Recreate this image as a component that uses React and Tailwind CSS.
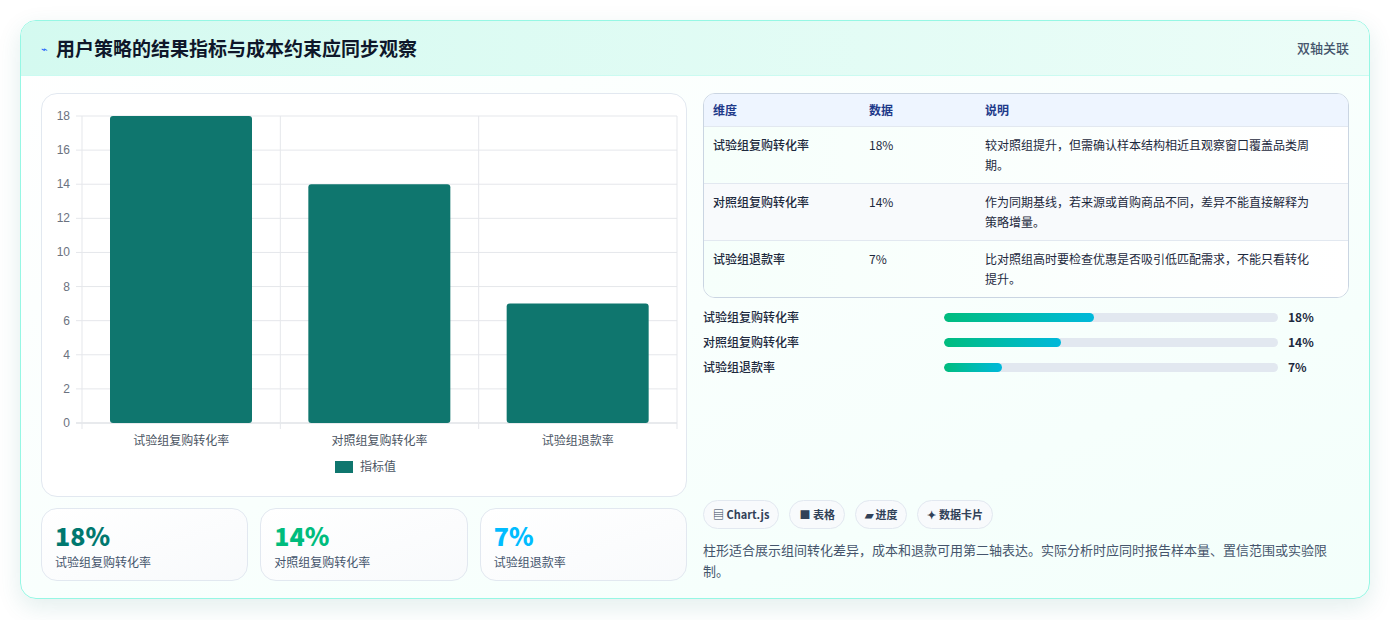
import React from "react";

const F = { fontFamily: '"Noto Sans CJK SC", "Noto Sans", sans-serif' };

const rows = [
  ["试验组复购转化率", "18%", "较对照组提升，但需确认样本结构相近且观察窗口覆盖品类周期。"],
  ["对照组复购转化率", "14%", "作为同期基线，若来源或首购商品不同，差异不能直接解释为策略增量。"],
  ["试验组退款率", "7%", "比对照组高时要检查优惠是否吸引低匹配需求，不能只看转化提升。"],
];
const data = [
  { label: "试验组复购转化率", v: 18 },
  { label: "对照组复购转化率", v: 14 },
  { label: "试验组退款率", v: 7 },
];

function Chart() {
  const x0 = 40, x1 = 635, y0 = 22, y1 = 329;
  const h = (y1 - y0) / 18;
  const cw = (x1 - x0) / 3;
  return (
    <svg width="646" height="402" className="block">
      {[0, 2, 4, 6, 8, 10, 12, 14, 16, 18].map((t) => (
        <g key={t}>
          <line x1={x0 - 6} x2={x1} y1={y1 - t * h} y2={y1 - t * h} stroke={t === 0 ? "#d1d5db" : "#e5e7eb"} />
          <text x={x0 - 12} y={y1 - t * h + 4} textAnchor="end" fontSize="12" fill="#6b7280" fontFamily="Liberation Sans, sans-serif">{t}</text>
        </g>
      ))}
      {[0, 1, 2, 3].map((i) => (
        <line key={i} x1={x0 + i * cw} x2={x0 + i * cw} y1={y0} y2={y1 + 6} stroke="#e5e7eb" />
      ))}
      {data.map((d, i) => (
        <g key={i}>
          <rect x={x0 + i * cw + 28} y={y1 - d.v * h} width={142} height={d.v * h} rx="3" fill="#0f766e" />
          <text x={x0 + i * cw + cw / 2} y={y1 + 22} textAnchor="middle" fontSize="12" fill="#4b5563" style={F}>{d.label}</text>
        </g>
      ))}
      <rect x="293" y="367" width="18" height="12" fill="#0f766e" />
      <text x="318" y="377" fontSize="12" fill="#4b5563" style={F}>指标值</text>
    </svg>
  );
}

export default function App() {
  return (
    <div className="min-h-screen bg-white p-5" style={F}>
      <div className="rounded-2xl border border-teal-200 bg-gradient-to-br from-white to-[#f3fffb] shadow-[0_8px_24px_rgba(15,118,110,0.12)] overflow-hidden">
        <div className="flex h-[55px] items-center justify-between bg-gradient-to-r from-[#d4faf0] to-[#ecfdf8] border-b border-teal-100 px-5">
          <div className="flex items-center gap-2">
            <span className="text-[11px] text-blue-600">⌁</span>
            <h1 className="text-[19px] font-bold text-[#0f172a]">用户策略的结果指标与成本约束应同步观察</h1>
          </div>
          <span className="text-[13px] font-medium text-slate-600">双轴关联</span>
        </div>
        <div className="grid grid-cols-2 gap-4 px-5 pt-[17px] pb-[17px]">
          <div className="flex flex-col gap-[11px]">
            <div className="rounded-2xl border border-slate-200 bg-white h-[404px] overflow-hidden">
              <Chart />
            </div>
            <div className="grid grid-cols-3 gap-3">
              {[["18%", "text-teal-700"], ["14%", "text-emerald-500"], ["7%", "text-sky-400"]].map(([v, c], i) => (
                <div key={i} className="h-[73px] rounded-2xl border border-slate-200 bg-gradient-to-br from-white to-slate-50 px-[13px] pt-[10px]">
                  <div className={`text-[25px] font-extrabold leading-[32px] ${c}`}>{v}</div>
                  <div className="text-[12px] text-slate-600 mt-0.5">{data[i].label}</div>
                </div>
              ))}
            </div>
          </div>
          <div className="flex flex-col">
            <div className="rounded-xl border border-slate-300 overflow-hidden bg-white">
              <div className="grid grid-cols-[156px_116px_1fr] bg-[#eef5ff] border-b border-slate-200 px-[9px] h-[33px] items-center text-[12px] font-bold text-[#1e3a8a]">
                <div>维度</div><div>数据</div><div>说明</div>
              </div>
              {rows.map((r, i) => (
                <div key={i} className={`grid grid-cols-[156px_116px_1fr] px-[9px] text-[12px] text-slate-800 leading-[20px] py-[8px] ${i < 2 ? "border-b border-slate-200" : ""} ${i === 1 ? "bg-slate-50" : "bg-gradient-to-r from-[#f6fffb] to-white"}`}>
                  <div className="font-medium">{r[0]}</div>
                  <div>{r[1]}</div>
                  <div className="pr-5">{r[2]}</div>
                </div>
              ))}
            </div>
            <div className="mt-[10px] flex flex-col gap-[7px]">
              {data.map((d, i) => (
                <div key={i} className="flex items-center h-[18px] text-[12px] font-medium text-slate-800">
                  <div className="w-[241px]">{d.label}</div>
                  <div className="w-[334px] h-[9px] rounded-full bg-slate-200 overflow-hidden">
                    <div className="h-full rounded-full bg-gradient-to-r from-emerald-500 to-cyan-500" style={{ width: `${(d.v / 40) * 100}%` }} />
                  </div>
                  <div className="ml-[10px] font-bold">{d.v}%</div>
                </div>
              ))}
            </div>
            <div className="flex-1" />
            <div className="flex gap-[10px]">
              {["▤ Chart.js", "■ 表格", "▰ 进度", "✦ 数据卡片"].map((t) => (
                <span key={t} className="rounded-full border border-slate-200 bg-slate-50 px-[9px] h-[29px] flex items-center text-[11px] font-bold text-slate-700">{t}</span>
              ))}
            </div>
            <p className="mt-[10px] text-[13px] leading-[21px] text-slate-600">柱形适合展示组间转化差异，成本和退款可用第二轴表达。实际分析时应同时报告样本量、置信范围或实验限制。</p>
          </div>
        </div>
      </div>
    </div>
  );
}
